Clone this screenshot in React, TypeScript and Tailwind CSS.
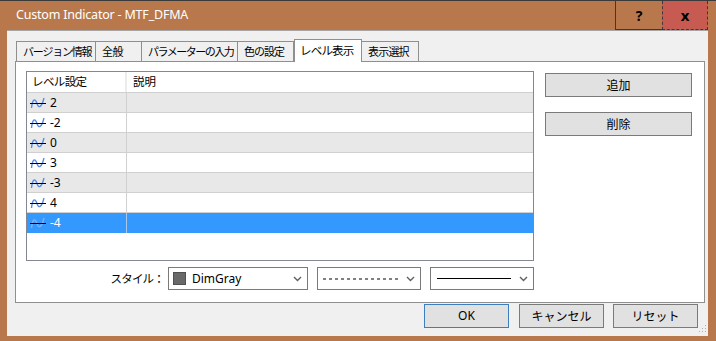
import React from "react";

const jp = { fontFamily: '"Noto Sans CJK JP", "Noto Sans", sans-serif' };
const lat = { fontFamily: '"Noto Sans", "Noto Sans CJK JP", sans-serif' };

function WaveIcon({ sel }: { sel?: boolean }) {
  return (
    <svg width="16" height="12" viewBox="0 0 16 12" className="shrink-0">
      <path
        d="M1.5 11 C2.5 2 5 0.5 7 6.5 C8.5 11.5 11.5 11 14 1"
        fill="none"
        stroke={sel ? "#7fb0f0" : "#5b8ee0"}
        strokeWidth="1.4"
      />
      <line x1="0" y1="6.5" x2="16" y2="6.5" stroke="#000" strokeWidth="1" />
    </svg>
  );
}

function Chevron() {
  return (
    <svg width="9" height="6" viewBox="0 0 9 6" className="shrink-0">
      <path d="M1 1 L4.5 4.5 L8 1" fill="none" stroke="#606060" strokeWidth="1.4" />
    </svg>
  );
}

const tabs = [
  { label: "バージョン情報", w: "w-[80px]", t: "tracking-[-1.2px] pl-[6px]" },
  { label: "全般", w: "w-[47px]", t: "tracking-[-0.5px] pl-[6px]" },
  { label: "パラメーターの入力", w: "w-[97px]", t: "tracking-[-1.5px] pl-[6px]" },
  { label: "色の設定", w: "w-[57px]", t: "tracking-[-1px] pl-[6px]" },
  { label: "レベル表示", w: "w-[68px]", t: "", active: true },
  { label: "表示選択", w: "w-[58px]", t: "tracking-[-0.8px] pl-[6px]" },
];

const rows = ["2", "-2", "0", "3", "-3", "4", "-4"];

function Btn({ children, w, blue }: { children: React.ReactNode; w: string; blue?: boolean }) {
  return (
    <div
      className={`${w} h-[24px] bg-[#e1e1e1] border ${blue ? "border-[#3d7ebf]" : "border-[#7a7a7a]"} flex items-center justify-center text-[12px] text-black`}
      style={jp}
    >
      {children}
    </div>
  );
}

export default function App() {
  return (
    <div className="w-[716px] h-[341px] bg-[#b9784b] border-t border-[#3a3a3a] flex flex-col overflow-hidden">
      {/* title bar */}
      <div className="h-[29px] flex items-stretch shrink-0">
        <div className="pl-[16px] flex items-center text-white text-[12.5px] tracking-[-0.2px]" style={lat}>
          Custom Indicator - MTF_DFMA
        </div>
        <div className="ml-auto flex items-stretch mr-[8px]">
          <div className="w-[47px] border-l border-b border-[#3a3a3a] flex items-center justify-center text-[14px] font-bold text-black" style={lat}>
            ?
          </div>
          <div className="w-[46px] bg-[#c75b52] border border-t-0 border-dashed border-[#3a3a3a] flex items-center justify-center text-[15px] font-bold text-black" style={lat}>
            x
          </div>
        </div>
      </div>

      {/* client */}
      <div className="ml-[7px] w-[701px] h-[306px] bg-[#f0f0f0] border-t border-[#a5a5a5] relative shrink-0">
        {/* tabs */}
        <div className="mt-[8px] pl-[9px] h-[22px] flex items-end">
          {tabs.map((t) =>
            t.active ? (
              <div
                key={t.label}
                className={`${t.w} h-[23px] -mb-px relative z-10 bg-white border border-b-0 border-[#8f8f8f] flex items-center pl-[5px] text-[11.5px] text-black tracking-[-0.8px] whitespace-nowrap`}
                style={jp}
              >
                {t.label}
              </div>
            ) : (
              <div
                key={t.label}
                className={`${t.w} ${t.t} h-[20px] bg-[#f0f0f0] border border-b-0 border-[#8f8f8f] -ml-px first:ml-0 flex items-center text-[11px] text-black whitespace-nowrap`}
                style={jp}
              >
                {t.label}
              </div>
            )
          )}
        </div>

        {/* panel */}
        <div className="ml-[8px] w-[690px] h-[242px] bg-white border border-[#8f8f8f] flex flex-col">
          <div className="flex mt-[9px] ml-[10px]">
            {/* list */}
            <div className="w-[508px] h-[190px] border border-[#828790] bg-white flex flex-col">
              <div className="h-[21px] flex border-b border-[#d0d0d0] text-[11.5px] text-black" style={jp}>
                <div className="w-[100px] border-r-2 border-[#ececec] flex items-center pl-[5px] tracking-[-0.6px]">レベル設定</div>
                <div className="flex-1 flex items-center pl-[6px]">説明</div>
              </div>
              {rows.map((r, i) => {
                const sel = i === rows.length - 1;
                const bg = sel ? "bg-[#3399ff]" : i % 2 === 0 ? "bg-[#e8e8e8]" : "bg-white";
                return (
                  <div key={r + i} className={`h-[20px] flex ${bg} ${sel ? "" : "border-b border-[#d0d0d0]"}`}>
                    <div className={`w-[100px] border-r ${sel ? "border-[#a8c8ea]" : "border-[#d0d0d0]"} flex items-center pl-[3px] gap-[4px]`}>
                      <WaveIcon sel={sel} />
                      <span className={`text-[12px] ${sel ? "text-white" : "text-black"}`} style={lat}>
                        {r}
                      </span>
                    </div>
                    <div className="flex-1" />
                  </div>
                );
              })}
            </div>
            {/* side buttons */}
            <div className="ml-[11px] mt-[2px] flex flex-col gap-[15px]">
              <Btn w="w-[147px]">追加</Btn>
              <Btn w="w-[147px]">削除</Btn>
            </div>
          </div>

          {/* style row */}
          <div className="flex items-center mt-[6px] h-[23px]">
            <div className="w-[149px] text-right text-[11.5px] text-black tracking-[-0.8px] pr-[1px]" style={jp}>
              スタイル：
            </div>
            <div className="ml-[3px] w-[140px] h-[23px] border border-[#7a7a7a] bg-white flex items-center pl-[4px] pr-[5px]">
              <div className="w-[13px] h-[13px] bg-[#696969] border border-[#505050]" />
              <span className="ml-[6px] text-[12px] text-black" style={lat}>DimGray</span>
              <div className="ml-auto"><Chevron /></div>
            </div>
            <div className="ml-[9px] w-[104px] h-[23px] border border-[#7a7a7a] bg-white flex items-center pl-[5px] pr-[5px]">
              <svg width="76" height="2" className="shrink-0">
                <line x1="0" y1="1" x2="76" y2="1" stroke="#000" strokeWidth="1" strokeDasharray="3 3" />
              </svg>
              <div className="ml-auto"><Chevron /></div>
            </div>
            <div className="ml-[9px] w-[104px] h-[23px] border border-[#7a7a7a] bg-white flex items-center pl-[6px] pr-[5px]">
              <div className="w-[74px] border-t border-black" />
              <div className="ml-auto"><Chevron /></div>
            </div>
          </div>
        </div>

        {/* bottom buttons */}
        <div className="flex justify-end pr-[10px] mt-[1px]">
          <Btn w="w-[85px]" blue>
            <span style={lat}>OK</span>
          </Btn>
          <div className="ml-[10px]"><Btn w="w-[85px]">キャンセル</Btn></div>
          <div className="ml-[9px]"><Btn w="w-[85px]">リセット</Btn></div>
        </div>

        {/* resize grip */}
        <svg width="8" height="8" className="absolute right-[1px] bottom-[3px]">
          <rect x="6" y="0" width="1" height="1" fill="#b0b0b0" />
          <rect x="3" y="3" width="1" height="1" fill="#b0b0b0" />
          <rect x="6" y="3" width="1" height="1" fill="#b0b0b0" />
          <rect x="0" y="6" width="1" height="1" fill="#b0b0b0" />
          <rect x="3" y="6" width="1" height="1" fill="#b0b0b0" />
          <rect x="6" y="6" width="1" height="1" fill="#b0b0b0" />
        </svg>
      </div>
    </div>
  );
}
